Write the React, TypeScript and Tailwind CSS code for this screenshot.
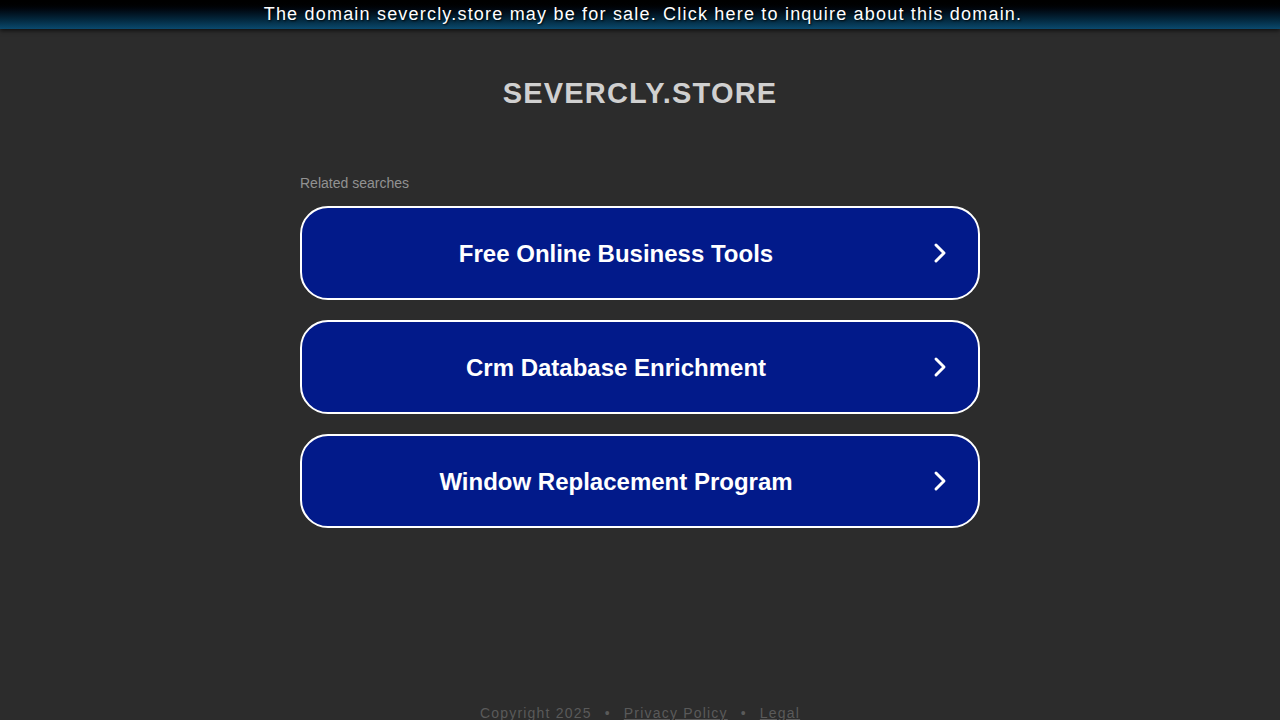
import { ChevronRight } from "lucide-react";

const searches = [
  "Free Online Business Tools",
  "Crm Database Enrichment",
  "Window Replacement Program",
];

export default function App() {
  return (
    <div className="min-h-screen bg-[#2c2c2c] font-['Liberation_Sans',Arial,sans-serif] flex flex-col">
      {/* Top banner */}
      <a
        href="#"
        className="block h-[29px] pl-[6px] bg-gradient-to-b from-[#000000] to-[#0b4a6e] shadow-[0_2px_4px_rgba(0,0,0,0.6)] text-center text-white text-[18px] leading-[28px] tracking-[1.2px] [text-shadow:1px_1px_2px_rgba(0,0,0,0.9)]"
      >
        The domain severcly.store may be for sale. Click here to inquire about this domain.
      </a>

      {/* Title */}
      <h1 className="mt-[46px] text-center text-[29px] leading-[36px] font-bold text-[#d0d0d0] tracking-[1.2px]">
        SEVERCLY.STORE
      </h1>

      {/* Related searches */}
      <div className="w-[680px] mx-auto mt-[64px]">
        <p className="text-[14px] leading-[16px] text-[#929292]">Related searches</p>
        <div className="mt-[15px] flex flex-col gap-[20px]">
          {searches.map((s) => (
            <a
              key={s}
              href="#"
              className="h-[94px] rounded-[28px] border-2 border-white bg-[#021a8a] flex items-center pl-[6px] pr-[22px]"
            >
              <span className="flex-1 text-center text-white font-bold text-[24px] translate-y-[1px]">{s}</span>
              <ChevronRight className="w-[32px] h-[32px] text-white" strokeWidth={2.2} />
            </a>
          ))}
        </div>
      </div>

      {/* Footer */}
      <footer className="mt-[176px] text-center text-[14px] leading-[18px] tracking-[1.2px] text-[#5a5a5a]">
        Copyright 2025
        <span className="mx-[13px]">•</span>
        <a href="#" className="underline">Privacy Policy</a>
        <span className="mx-[13px]">•</span>
        <a href="#" className="underline">Legal</a>
      </footer>
    </div>
  );
}
